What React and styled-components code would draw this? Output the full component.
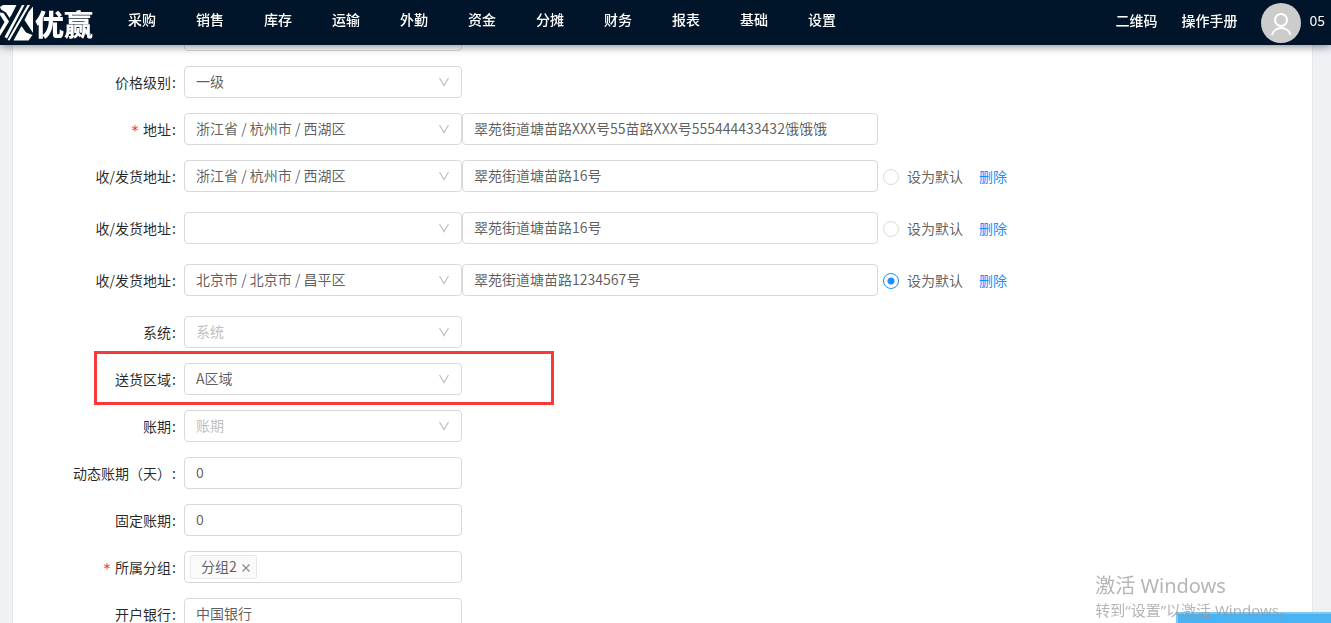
import React from "react";
import styled, { createGlobalStyle } from "styled-components";

const GlobalStyle = createGlobalStyle`
  * {
    box-sizing: border-box;
  }
  body {
    margin: 0;
    background: #f0f1f5;
    color: rgba(0, 0, 0, 0.85);
    font-family: "Noto Sans CJK SC", "Noto Sans", sans-serif;
    font-size: 14px;
    line-height: 22px;
  }
  input,
  select,
  button {
    font: inherit;
  }
`;

const Page = styled.div`
  height: 100vh;
  overflow: hidden;
`;

const Header = styled.header`
  position: fixed;
  z-index: 10;
  top: 0;
  left: 0;
  right: 0;
  height: 45px;
  display: flex;
  align-items: center;
  padding-right: 6px;
  background: #001529;
  box-shadow: 0 2px 8px rgba(0, 21, 41, 0.45);
`;

const Logo = styled.a`
  display: flex;
  align-items: center;
  color: #fff;
  font-size: 29px;
  font-weight: 900;
  line-height: 42px;
  text-decoration: none;
  svg {
    display: block;
  }
`;

const Nav = styled.nav`
  flex: 1;
  display: flex;
  gap: 40px;
  padding: 0 0 8px 35px;
`;

const NavLink = styled.a`
  color: #fff;
  font-weight: 500;
  text-decoration: none;
  white-space: nowrap;
`;

const Tools = styled.div`
  display: flex;
  align-items: center;
  gap: 24px;
  padding-bottom: 5px;
  color: #fff;
`;

const User = styled.div`
  display: flex;
  align-items: center;
  gap: 8px;
  height: 40px;
`;

const Avatar = styled.span`
  width: 40px;
  height: 40px;
  margin-top: 6px;
  border-radius: 50%;
  background: #ccc;
  svg {
    display: block;
  }
`;

const Card = styled.main`
  margin: 0 18px 0 12px;
  padding-top: 19px;
  background: #fff;
  border: 1px solid #e8e8e8;
  border-top: 0;
`;

const Form = styled.form`
  display: flex;
  flex-direction: column;
  gap: 15px;
`;

const AddressList = styled.div`
  display: flex;
  flex-direction: column;
  gap: 20px;
  margin-bottom: 5px;
`;

const Row = styled.div`
  position: relative;
  display: flex;
  align-items: center;
`;

const Label = styled.label`
  flex: none;
  width: 171px;
  padding-right: 8px;
  text-align: right;
  white-space: nowrap;
  &::before {
    content: "${(p) => (p.$required ? "*" : "")}";
    margin-right: 4px;
    color: #f5222d;
    font-family: "DejaVu Sans Mono", monospace;
    line-height: 1;
  }
  &::after {
    content: ":";
    margin-left: 1px;
  }
`;

const fieldBox = `
  width: 100%;
  height: 32px;
  padding: 0 11px 2px;
  color: rgba(0, 0, 0, 0.65);
  background: #fff;
  border: 1px solid #d9d9d9;
  border-radius: 4px;
  outline: none;
`;

const Field = styled.div`
  position: relative;
  flex: 0 1 ${(p) => (p.$wide ? "416px" : "278px")};
`;

const Input = styled.input`
  ${fieldBox}
  display: block;
`;

const SelectBox = styled.select`
  ${fieldBox}
  display: block;
  appearance: none;
  color: ${(p) => (p.$empty ? "#bfbfbf" : "rgba(0, 0, 0, 0.65)")};
`;

const Arrow = styled.svg`
  position: absolute;
  top: 10px;
  right: 12px;
  pointer-events: none;
`;

const TagBox = styled.div`
  ${fieldBox}
  display: flex;
  align-items: center;
  padding: 0 5px;
  input {
    flex: 1;
    min-width: 0;
    border: 0;
    outline: none;
    background: transparent;
  }
`;

const Tag = styled.span`
  display: flex;
  align-items: center;
  gap: 4px;
  height: 24px;
  padding: 0 5px 2px 10px;
  color: rgba(0, 0, 0, 0.65);
  line-height: 20px;
  background: #fafafa;
  border: 1px solid #e8e8e8;
  border-radius: 2px;
  button {
    display: flex;
    padding: 3px 0 0;
    border: 0;
    background: none;
  }
`;

const RadioLabel = styled.label`
  display: flex;
  align-items: center;
  gap: 8px;
  margin: 0 16px 0 5px;
  color: rgba(0, 0, 0, 0.65);
  white-space: nowrap;
`;

const Radio = styled.input`
  appearance: none;
  width: 16px;
  height: 16px;
  margin: 2px 0 0;
  border: 1px solid #d9d9d9;
  border-radius: 50%;
  background: #fff;
  &:checked {
    border-color: #1890ff;
    background: radial-gradient(circle, #1890ff 0 3px, #fff 4px);
  }
`;

const DeleteLink = styled.a`
  color: #1890ff;
  text-decoration: none;
  white-space: nowrap;
`;

const Highlight = styled.span`
  position: absolute;
  top: -12px;
  left: 81px;
  width: 460px;
  height: 54px;
  border: 3px solid #f93939;
  pointer-events: none;
`;

const Watermark = styled.div`
  position: fixed;
  z-index: 20;
  right: 37px;
  bottom: 2px;
  color: rgba(150, 150, 150, 0.7);
  font-family: "Noto Sans", "Noto Sans CJK SC", sans-serif;
  font-size: 15px;
  pointer-events: none;
  white-space: nowrap;
  p {
    margin: 0;
  }
  p:first-child {
    font-size: 20px;
    line-height: 26px;
  }
`;

const ChatBar = styled.div`
  position: fixed;
  z-index: 15;
  right: 0;
  bottom: 0;
  width: 155px;
  height: 11px;
  background: #4ab3f4;
  border: 2px solid #7cc8f5;
  border-width: 2px 0 0 2px;
`;

const menus = ["采购", "销售", "库存", "运输", "外勤", "资金", "分摊", "财务", "报表", "基础", "设置"];

const deliveries = [
  { id: "d1", area: "浙江省 / 杭州市 / 西湖区", detail: "翠苑街道塘苗路16号" },
  { id: "d2", area: "", detail: "翠苑街道塘苗路16号" },
  { id: "d3", area: "北京市 / 北京市 / 昌平区", detail: "翠苑街道塘苗路1234567号", checked: true },
];

function Select({ id, value, placeholder }) {
  return (
    <Field>
      <SelectBox id={id} $empty={!value}>
        <option>{value || placeholder || ""}</option>
      </SelectBox>
      <Arrow width="12" height="12" viewBox="0 0 12 12" fill="none" stroke="#bfbfbf" strokeWidth="1.2">
        <path d="M1.5 2 6 9.5 10.5 2" />
      </Arrow>
    </Field>
  );
}

function SelectRow({ id, label, children, ...rest }) {
  return (
    <Row>
      <Label htmlFor={id}>{label}</Label>
      <Select id={id} {...rest} />
      {children}
    </Row>
  );
}

function InputRow({ id, label, value }) {
  return (
    <Row>
      <Label htmlFor={id}>{label}</Label>
      <Field>
        <Input id={id} defaultValue={value} />
      </Field>
    </Row>
  );
}

function AddressRow({ id, label, area, detail, required, children }) {
  return (
    <Row>
      <Label htmlFor={id} $required={required}>{label}</Label>
      <Select id={id} value={area} />
      <Field $wide>
        <Input aria-label={label} defaultValue={detail} />
      </Field>
      {children}
    </Row>
  );
}

export default function App() {
  return (
    <Page>
      <GlobalStyle />
      <Header>
        <Logo href="#">
          <svg width="35" height="45" viewBox="0 0 35 45" fill="#fff">
            <path d="M3 5h13.500l-5 10L9.500 18 6 12.500 1 9.500 0 7z" />
            <path d="M0 12.500l3.500 .5 5.500 8.500L0 36v-6l4.500-8L0 15z" />
            <path d="M22 5h2.500L7 38.500 4.500 37z" />
            <path d="M27.500 5h2.500L9.500 40.500 7.500 40z" />
            <path d="M28.500 12L33 6.500V33L24.500 20z" />
            <path d="M21.500 26L26 32.500l6.500 2.500-4 5.500H13.500z" />
          </svg>
          优赢
        </Logo>
        <Nav>
          {menus.map((name) => (
            <NavLink href="#" key={name}>{name}</NavLink>
          ))}
        </Nav>
        <Tools>
          <NavLink href="#">二维码</NavLink>
          <NavLink href="#">操作手册</NavLink>
          <User>
            <Avatar>
              <svg width="40" height="40" viewBox="0 0 40 40" fill="none" stroke="#fff" strokeWidth="2">
                <circle cx="20" cy="17" r="6" />
                <path d="M11 32a9.500 9 0 0 1 18.500 0" />
              </svg>
            </Avatar>
            05
          </User>
        </Tools>
      </Header>
      <Card>
        <Form>
          <SelectRow id="type" label="" />
          <SelectRow id="level" label="价格级别" value="一级" />
          <AddressRow
            id="address"
            label="地址"
            required
            area="浙江省 / 杭州市 / 西湖区"
            detail="翠苑街道塘苗路XXX号55苗路XXX号555444433432饿饿饿"
          />
          <AddressList>
            {deliveries.map((item) => (
              <AddressRow key={item.id} id={item.id} label="收/发货地址" area={item.area} detail={item.detail}>
                <RadioLabel>
                  <Radio type="radio" name="default" defaultChecked={item.checked} />
                  设为默认
                </RadioLabel>
                <DeleteLink href="#">删除</DeleteLink>
              </AddressRow>
            ))}
          </AddressList>
          <SelectRow id="system" label="系统" placeholder="系统" />
          <SelectRow id="region" label="送货区域" value="A区域">
            <Highlight />
          </SelectRow>
          <SelectRow id="period" label="账期" placeholder="账期" />
          <InputRow id="dynamic" label="动态账期（天）" value="0" />
          <InputRow id="fixed" label="固定账期" value="0" />
          <Row>
            <Label htmlFor="group" $required>所属分组</Label>
            <Field>
              <TagBox>
                <Tag>
                  分组2
                  <button type="button" aria-label="移除">
                    <svg width="10" height="10" viewBox="0 0 10 10" stroke="#8c8c8c" strokeWidth="1.2">
                      <path d="M1.5 1.5l7 7M8.5 1.5l-7 7" />
                    </svg>
                  </button>
                </Tag>
                <input id="group" />
              </TagBox>
            </Field>
          </Row>
          <InputRow id="bank" label="开户银行" value="中国银行" />
        </Form>
      </Card>
      <ChatBar />
      <Watermark>
        <p>激活 Windows</p>
        <p>转到“设置”以激活 Windows。</p>
      </Watermark>
    </Page>
  );
}
